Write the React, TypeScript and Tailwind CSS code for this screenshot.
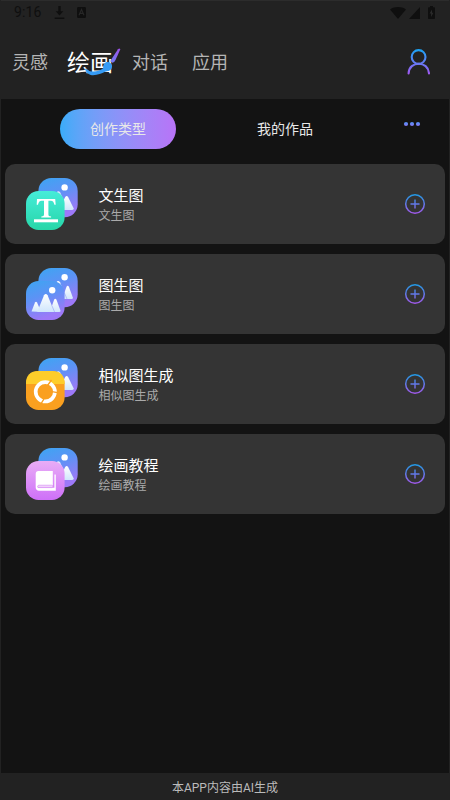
import type { ReactNode } from "react";

function StatusBar() {
  return (
    <div className="flex h-[23px] items-center justify-between pl-[13px] pr-[11px] text-[#0f0f0f]">
      <div className="flex items-center">
        <span className="w-[40px] font-[Roboto] text-[14px] leading-[23px] tracking-[0.1px]">9:16</span>
        <svg className="h-[14px] w-[11px]" viewBox="0 0 11 14" fill="currentColor">
          <path d="M4.3 0h2.4v5.2h2.6L5.5 9.6 1.7 5.2h2.6zM.7 11.6h9.6v1.5H.7z" />
        </svg>
        <svg className="ml-3 h-[11px] w-[9px]" viewBox="0 0 9 11">
          <rect width="9" height="11" rx="1.2" fill="currentColor" />
          <path d="M2 8.3 4.5 2.5 7 8.3M3 6.4h3" fill="none" stroke="#272727" strokeWidth="1.1" />
        </svg>
      </div>
      <div className="flex items-center">
        <svg className="h-3 w-4" viewBox="0 0 16 12" fill="currentColor">
          <path d="M0 2.4C4.6-.8 11.4-.8 16 2.4L8 12z" />
        </svg>
        <svg className="ml-[3px] h-3 w-[11px]" viewBox="0 0 11 12" fill="currentColor">
          <path d="M11 0v12H0z" />
        </svg>
        <svg className="ml-2 mr-[3px] h-[13px] w-[7px]" viewBox="0 0 7 13">
          <path d="M2 0h3v1.2h1.2q.8 0 .8.8v10.2q0 .8-.8.8H.8Q0 13 0 12.2V2q0-.8.8-.8H2z" fill="currentColor" />
          <path d="M4 3.500 1.600 7.500h1.500V11l2.300-4.300H4z" fill="#2b2b2b" />
        </svg>
      </div>
    </div>
  );
}

function BrushIcon() {
  return (
    <svg className="absolute left-[18px] top-px h-[30px] w-9" viewBox="0 0 36 30">
      <defs>
        <linearGradient id="brush" x1="0" y1="1" x2="1" y2="0">
          <stop offset="0" stopColor="#6d80f5" />
          <stop offset="1" stopColor="#a04ee8" />
        </linearGradient>
      </defs>
      <path
        d="M0 21.500c1.600 1 3 .7 4.200 2.400 4.200 1.500 9.800.6 14-2.600-.4-4 1.600-6.600 4.800-6.300 3.600.3 4.800 3.600 3.700 6.200-1.200 2.700-3.900 2.500-6.600 3.600-3.600 1.700-7.800 3.700-13.100 3.400C3.900 27.800.8 25.500 0 21.500z"
        fill="#359bf5"
      />
      <path d="M25.100 14.200 33 2.200q1.700-1.700 2.200.3L30.500 13q-1.400 3-3.200 2.800z" fill="url(#brush)" />
    </svg>
  );
}

function Header() {
  return (
    <header className="h-[99px] border-t border-[#2c2c2c] bg-[#222]">
      <StatusBar />
      <div className="flex h-[75px] items-center pl-[11px] text-[18px] text-[#b5b5b5]">
        <span className="w-[55px]">灵感</span>
        <span className="relative -mt-0.5 w-[65px] text-[23px] leading-[30px] text-white">
          绘画
          <BrushIcon />
        </span>
        <span className="w-[60px]">对话</span>
        <span>应用</span>
        <svg className="ml-auto mr-[19px] h-[26px] w-6" viewBox="0 0 24 26" fill="none">
          <defs>
            <linearGradient id="user" gradientUnits="userSpaceOnUse" x1="0" y1="0" x2="0" y2="26">
              <stop offset="0" stopColor="#18a5f5" />
              <stop offset="1" stopColor="#a755f2" />
            </linearGradient>
          </defs>
          <g stroke="url(#user)" strokeWidth="2.1" strokeLinecap="round">
            <circle cx="12.600" cy="8" r="6.900" />
            <path d="M2.600 24.400C3 11.500 22.400 11.500 23 24.400" />
          </g>
        </svg>
      </div>
    </header>
  );
}

function Mountains() {
  return (
    <>
      <circle cx="26.200" cy="9.300" r="3.200" fill="#fff" />
      <path d="M5.500 30.500 9 21.600q1-1.700 2 0l4.200 9.400z" fill="url(#snow)" />
      <path d="M23.800 31 28.100 18.800q1.200-2 2.400 0l4 11q.2 1.300-1.300 1.300z" fill="url(#snow)" />
      <path d="M11.200 31 18 14.200q1.700-2.500 3.600 0L28.400 31z" fill="url(#snow)" />
      <path d="M28.600 31 25.900 24.600" stroke="#8b93f5" strokeWidth=".5" />
    </>
  );
}

function Peaks() {
  return (
    <>
      <circle cx="26.200" cy="9.400" r="3.200" fill="#fff" />
      <path d="M11.200 31 18.200 14.600q1.700-2.500 3.600 0L29 31z" fill="#dfe9ff" />
      <path d="M20.500 32 26.800 19q1.500-1.800 2.900 0l5.500 11.300q.4 1.700-1.400 1.700z" fill="url(#snow)" />
    </>
  );
}

function TypeIcon({ back, children }: { back: ReactNode; children: ReactNode }) {
  return (
    <svg className="h-[53px] w-[53px]" viewBox="0 0 53 53">
      <defs>
        <linearGradient id="sky" x1="0" y1="0" x2=".35" y2="1">
          <stop offset="0" stopColor="#3ca6f2" />
          <stop offset=".45" stopColor="#5b93f5" />
          <stop offset="1" stopColor="#9d79f8" />
        </linearGradient>
        <linearGradient id="snow" x1="0" y1="0" x2="0" y2="1">
          <stop offset="0" stopColor="#fff" />
          <stop offset="1" stopColor="#cfe6fc" />
        </linearGradient>
        <linearGradient id="mint" x1="0" y1="0" x2="0" y2="1">
          <stop offset="0" stopColor="#46ecd9" />
          <stop offset="1" stopColor="#26d6a8" />
        </linearGradient>
        <linearGradient id="pink" x1="0" y1="0" x2="0" y2="1">
          <stop offset="0" stopColor="#e9adf6" />
          <stop offset="1" stopColor="#ce70f8" />
        </linearGradient>
      </defs>
      <g transform="translate(12.400 0)">
        <rect width="39.300" height="39.300" rx="13" fill="url(#sky)" />
        {back}
      </g>
      <g transform="translate(0 13)">{children}</g>
    </svg>
  );
}

function TextTile() {
  return (
    <>
      <rect width="38.600" height="39" rx="12.500" fill="url(#mint)" />
      <path
        d="M11 8h18.200l.5 5.800h-1.300c-.6-3-1.400-4.100-3.600-4.100h-2.400v13.600c0 1.700.7 2.100 2.700 2.200v1.100h-9.800v-1.100c2-.1 2.700-.5 2.700-2.200V9.700h-2.400c-2.200 0-3 1.100-3.600 4.100h-1.300z"
        fill="#fff"
      />
      <path d="M8 28.300h24v3H8z" fill="#fff" />
    </>
  );
}

function ImageTile() {
  return (
    <>
      <rect width="38.600" height="39" rx="12.500" fill="url(#sky)" />
      <Mountains />
    </>
  );
}

function SimilarTile() {
  return (
    <>
      <rect width="38.600" height="39" rx="12.500" fill="#faa01f" />
      <path d="M0 13v-.5Q0 0 12.500 0h13.600q12.500 0 12.500 12.500v.5z" fill="#fdcd2a" />
      <circle cx="19.300" cy="20.800" r="9.600" fill="none" stroke="#fff" strokeWidth="3.700" />
      <path d="m21.500 14.500 4-5.500M18 27.800l-3.200 5.400M26 20.600l7 1.200" stroke="#faa01f" strokeWidth="1.300" />
    </>
  );
}

function BookTile() {
  return (
    <>
      <rect width="38.600" height="39" rx="12.500" fill="url(#pink)" />
      <path
        d="M12.500 10h14.300v15H12.600c-1.500 0-1.500 1.800 0 1.800h15.800V13.500h1.400v16.300H13c-2 0-3.300-1.300-3.300-3.200V13q0-3 2.800-3z"
        fill="#fff"
      />
      <rect x="11.700" y="24.200" width="15.200" height="2.400" rx="1.200" fill="#f1d3fb" stroke="#d58af5" strokeWidth=".6" />
    </>
  );
}

function AddIcon() {
  return (
    <svg className="h-[22px] w-[22px]" viewBox="0 0 22 22" fill="none">
      <defs>
        <linearGradient id="add" gradientUnits="userSpaceOnUse" x1="0" y1="1" x2="0" y2="21">
          <stop offset="0" stopColor="#1e9be3" />
          <stop offset="1" stopColor="#a556ec" />
        </linearGradient>
      </defs>
      <circle cx="11" cy="11" r="9.300" stroke="url(#add)" strokeWidth="1.5" />
      <path d="M6.500 10.300h9v1.400h-9zM10.300 6.500h1.400v9h-1.400z" fill="url(#add)" />
    </svg>
  );
}

const types = [
  { name: "文生图", tile: <TextTile />, back: <Peaks /> },
  { name: "图生图", tile: <ImageTile />, back: <Mountains /> },
  { name: "相似图生成", tile: <SimilarTile />, back: <Peaks /> },
  { name: "绘画教程", tile: <BookTile />, back: <Peaks /> },
];

export default function App() {
  return (
    <div className="flex h-[800px] w-[450px] flex-col overflow-hidden border-x border-[#222] bg-[#131313] font-['Noto_Sans_CJK_SC',sans-serif]">
      <Header />
      <nav className="flex h-[65px] items-start pl-[59px] pt-2.5 text-[14px] text-[#e8e8e8]">
        <div className="flex h-10 w-[116px] items-center justify-center rounded-full bg-linear-to-r from-[#38acf8] to-[#b873f7] pb-0.5">
          创作类型
        </div>
        <div className="ml-[81px] flex h-10 items-center pb-0.5">我的作品</div>
        <svg className="ml-[90px] mt-[12px] h-[6px] w-[18px]" viewBox="0 0 18 6">
          <defs>
            <linearGradient id="dots" gradientUnits="userSpaceOnUse" x1="0" y1="0" x2="0" y2="6">
              <stop offset="0" stopColor="#4299f5" />
              <stop offset="1" stopColor="#9470f5" />
            </linearGradient>
          </defs>
          <g fill="url(#dots)">
            <circle cx="3" cy="3" r="2.100" />
            <circle cx="9" cy="3" r="2.100" />
            <circle cx="15" cy="3" r="2.100" />
          </g>
        </svg>
      </nav>
      <main className="flex flex-1 flex-col gap-2.5 px-1">
        {types.map((type) => (
          <div key={type.name} className="flex h-20 items-center rounded-[10px] bg-[#343434] pl-[21px] pr-[19px]">
            <TypeIcon back={type.back}>{type.tile}</TypeIcon>
            <div className="ml-[19.5px] flex-1">
              <div className="text-[15px] leading-[22px] text-white">{type.name}</div>
              <div className="text-[12px] leading-[18px] text-[#aaa]">{type.name}</div>
            </div>
            <AddIcon />
          </div>
        ))}
      </main>
      <footer className="flex h-[27px] items-center justify-center bg-[#222] pt-0.5 font-[Roboto,'Noto_Sans_CJK_SC',sans-serif] text-[12px] text-[#bbb]">
        本APP内容由AI生成
      </footer>
    </div>
  );
}
